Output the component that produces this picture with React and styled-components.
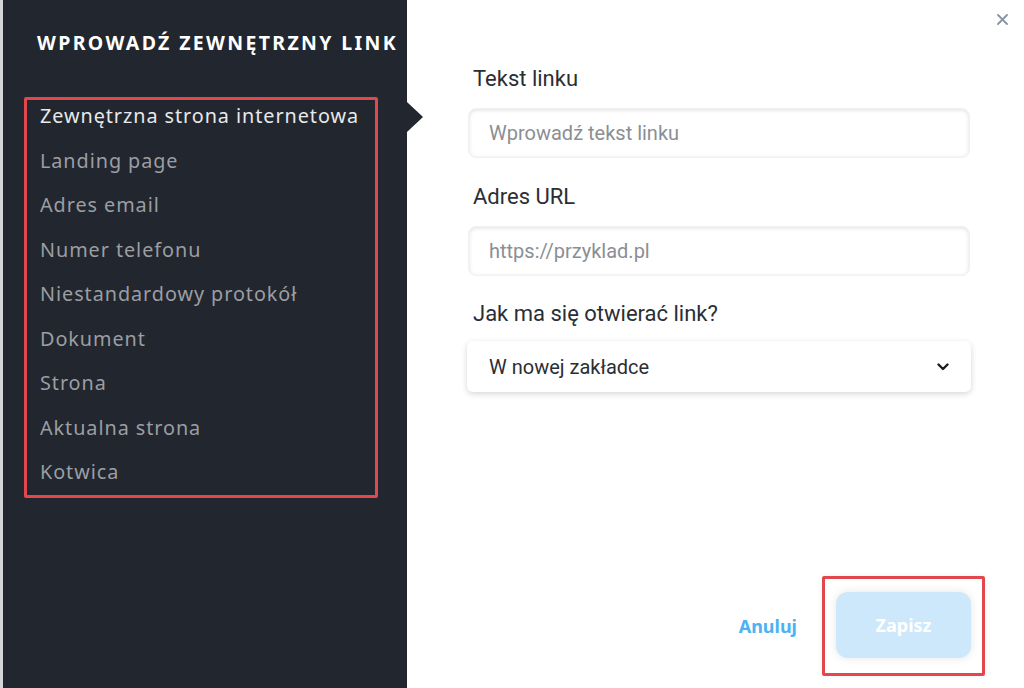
import React from 'react';
import styled, { createGlobalStyle } from 'styled-components';

const GlobalStyle = createGlobalStyle`
  html, body {
    margin: 0;
    padding: 0;
    background: #ffffff;
  }
  * {
    box-sizing: border-box;
  }
`;

const Modal = styled.div`
  width: 1024px;
  height: 688px;
  display: flex;
  background: #ffffff;
  position: relative;
  overflow: hidden;
`;

const Sidebar = styled.aside`
  position: relative;
  width: 407px;
  flex-shrink: 0;
  background: #22262e;
  border-left: 3px solid #d4d5d7;
  padding: 31px 0 0 21px;
  font-family: 'Noto Sans', sans-serif;

  &::after {
    content: '';
    position: absolute;
    right: -16px;
    top: 102px;
    border-top: 15.5px solid transparent;
    border-bottom: 15.5px solid transparent;
    border-left: 16px solid #22262e;
  }
`;

const Title = styled.h2`
  margin: 0 0 0 13px;
  color: #ffffff;
  font-size: 19.5px;
  line-height: 24px;
  font-weight: 700;
  letter-spacing: 2.35px;
  text-transform: uppercase;
  white-space: nowrap;
`;

const Highlight = styled.div`
  border: 3px solid #e2474d;
  border-radius: 2px;
  width: ${(p) => p.$w}px;
  padding: ${(p) => p.$pad};
  box-shadow: ${(p) => (p.$soft ? '0 0 6px rgba(0,0,0,0.06)' : 'none')};
`;

const MenuBox = styled(Highlight)`
  margin-top: 42px;
`;

const Menu = styled.ul`
  list-style: none;
  margin: -6px 0 0;
  padding: 0 0 0 13px;
`;

const MenuItem = styled.li`
  height: 44.5px;
  line-height: 44.5px;
  font-size: 19.8px;
  letter-spacing: 0.95px;
  white-space: nowrap;
  color: ${(p) => (p.$active ? '#e8e9ea' : '#9b9ea3')};
`;

const Main = styled.main`
  flex: 1;
  display: flex;
  flex-direction: column;
  padding: 66px 39px 12px 60px;
  font-family: 'Roboto', sans-serif;
`;

const CloseButton = styled.button`
  position: absolute;
  top: 12px;
  right: 15px;
  width: 14px;
  height: 14px;
  padding: 0;
  border: none;
  background: none;
  display: flex;
  align-items: center;
  justify-content: center;
  cursor: pointer;
`;

const Form = styled.div`
  width: 504px;
  display: flex;
  flex-direction: column;
`;

const Label = styled.label`
  display: block;
  margin: 0 0 0 6px;
  font-size: 22px;
  line-height: 26px;
  color: #2b2e34;
  margin-top: ${(p) => p.$top || 0}px;
`;

const Input = styled.input`
  display: block;
  margin: 16px 0 0 1px;
  width: 502px;
  height: 50px;
  border: 1px solid #f0f1f2;
  border-radius: 8px;
  background: #ffffff;
  box-shadow: inset 0 1px 4px rgba(0, 0, 0, 0.13);
  padding: 0 20px;
  font-family: 'Roboto', sans-serif;
  font-size: 20px;
  color: #2b2e34;
  outline: none;

  &::placeholder {
    color: #8b8e94;
  }
`;

const Select = styled.div`
  margin-top: 14px;
  width: 504px;
  height: 51px;
  border-radius: 6px;
  background: #ffffff;
  box-shadow: 0 2px 6px rgba(0, 0, 0, 0.16);
  display: flex;
  align-items: center;
  justify-content: space-between;
  padding: 0 22px;
  font-size: 20px;
  color: #2b2e34;
`;

const Footer = styled.div`
  margin-top: auto;
  display: flex;
  justify-content: flex-end;
  align-items: center;
  gap: 25px;
  font-family: 'Noto Sans', sans-serif;
`;

const CancelButton = styled.button`
  border: none;
  background: none;
  padding: 0;
  font-family: inherit;
  font-size: 18px;
  font-weight: 700;
  color: #4cb2f3;
  cursor: pointer;
`;

const SaveButton = styled.button`
  width: 135px;
  height: 66px;
  border: none;
  border-radius: 12px;
  background: #cde8fb;
  color: #ffffff;
  font-family: inherit;
  font-size: 18px;
  font-weight: 700;
  box-shadow: 0 0 10px rgba(0, 0, 0, 0.1);
  cursor: default;
`;

const options = [
  'Zewnętrzna strona internetowa',
  'Landing page',
  'Adres email',
  'Numer telefonu',
  'Niestandardowy protokół',
  'Dokument',
  'Strona',
  'Aktualna strona',
  'Kotwica',
];

const App = () => {
  return (
    <>
      <GlobalStyle />
      <Modal>
        <Sidebar>
          <Title>Wprowadź zewnętrzny link</Title>
          <MenuBox $w={354} $pad="0">
            <Menu>
              {options.map((o, i) => (
                <MenuItem key={o} $active={i === 0}>
                  {o}
                </MenuItem>
              ))}
            </Menu>
          </MenuBox>
        </Sidebar>
        <Main>
          <CloseButton aria-label="Zamknij">
            <svg width="11" height="11" viewBox="0 0 11 11">
              <path d="M1 1L10 10M10 1L1 10" stroke="#8795a3" strokeWidth="1.8" strokeLinecap="round" />
            </svg>
          </CloseButton>
          <Form>
            <Label>Tekst linku</Label>
            <Input placeholder="Wprowadź tekst linku" />
            <Label $top={26}>Adres URL</Label>
            <Input placeholder="https://przyklad.pl" />
            <Label $top={25}>Jak ma się otwierać link?</Label>
            <Select>
              <span>W nowej zakładce</span>
              <svg width="12" height="8" viewBox="0 0 12 8">
                <path d="M1.5 1.5L6 6L10.5 1.5" fill="none" stroke="#1c1e22" strokeWidth="2.4" strokeLinecap="round" strokeLinejoin="round" />
              </svg>
            </Select>
          </Form>
          <Footer>
            <CancelButton>Anuluj</CancelButton>
            <Highlight $w={163} $pad="13px 10px 15px 11px" $soft>
              <SaveButton>Zapisz</SaveButton>
            </Highlight>
          </Footer>
        </Main>
      </Modal>
    </>
  );
};

export default App;
